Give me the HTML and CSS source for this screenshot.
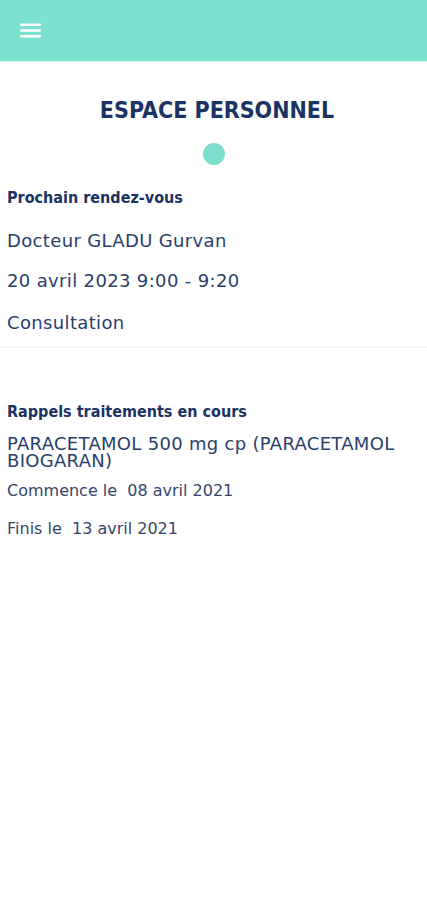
FILE: index.html
```html
<!DOCTYPE html>
<html lang="fr">
<head>
<meta charset="utf-8">
<link rel="stylesheet" href="styles.css">
</head>
<body>
<header class="appbar">
  <button class="menu" aria-label="menu">
    <svg width="22" height="16" viewBox="0 0 22 16"><rect x="0" y="0.5" width="21" height="2.6" rx="1" fill="#fff"/><rect x="0" y="6.2" width="21" height="2.6" rx="1" fill="#fff"/><rect x="0" y="11.9" width="21" height="2.6" rx="1" fill="#fff"/></svg>
  </button>
</header>
<main class="content">
  <h1 class="title">ESPACE PERSONNEL</h1>
  <div class="dot"></div>
  <section class="rdv">
    <h2 class="section-title">Prochain rendez-vous</h2>
    <p class="line">Docteur GLADU Gurvan</p>
    <p class="line">20 avril 2023 9:00 - 9:20</p>
    <p class="line">Consultation</p>
  </section>
  <section class="rappels">
    <h2 class="section-title">Rappels traitements en cours</h2>
    <p class="med">PARACETAMOL 500 mg cp (PARACETAMOL BIOGARAN)</p>
    <p class="small">Commence le &nbsp;08 avril 2021</p>
    <p class="small">Finis le &nbsp;13 avril 2021</p>
  </section>
</main>
</body>
</html>
```
FILE: styles.css
```css
* { box-sizing: border-box; }
html, body { margin: 0; padding: 0; background: #fff; }
body { font-family: "DejaVu Sans", sans-serif; color: #253a6a; }
.appbar {
  height: 62px;
  background: #7ce1ce;
  border-bottom: 1px solid #d4f4ee;
  display: flex;
  align-items: center;
  padding-left: 20px;
}
.menu { background: none; border: 0; padding: 0; display: flex; }
.content { display: flex; flex-direction: column; }
.title {
  margin: 34px 0 0;
  padding-left: 7px;
  text-align: center;
  font-family: "DejaVu Sans Condensed", "DejaVu Sans", sans-serif;
  font-weight: 600;
  font-size: 23px;
  line-height: 28px;
  color: #1b3363;
}
.dot {
  width: 22px; height: 22px; border-radius: 50%;
  background: #7ddfcb;
  align-self: center;
  margin-top: 19px;
}
.rdv {
  padding: 0 7px 13px;
  border-bottom: 1px solid #eef0f2;
}
.section-title {
  margin: 0;
  font-family: "DejaVu Sans Condensed", "DejaVu Sans", sans-serif;
  font-weight: 600;
  font-size: 16px;
  line-height: 20px;
  color: #1b3363;
}
.rdv .section-title { margin-top: 23px; }
.line {
  margin: 18px 0 0;
  font-size: 18px;
  line-height: 22px;
  letter-spacing: 0.35px;
  color: #2a3e6b;
}
.rdv .section-title + .line { margin-top: 22px; }
.line:last-child { margin-top: 20px; }
.rappels { padding: 0 7px; }
.rappels .section-title { margin-top: 54px; }
.med {
  margin: 13px 0 0;
  font-size: 18px;
  line-height: 17px;
  letter-spacing: 0.3px;
  color: #2a3e6b;
}
.small {
  margin: 13px 0 0;
  font-size: 16px;
  line-height: 18px;
  color: #36466b;
}
.small + .small { margin-top: 20px; }
```
